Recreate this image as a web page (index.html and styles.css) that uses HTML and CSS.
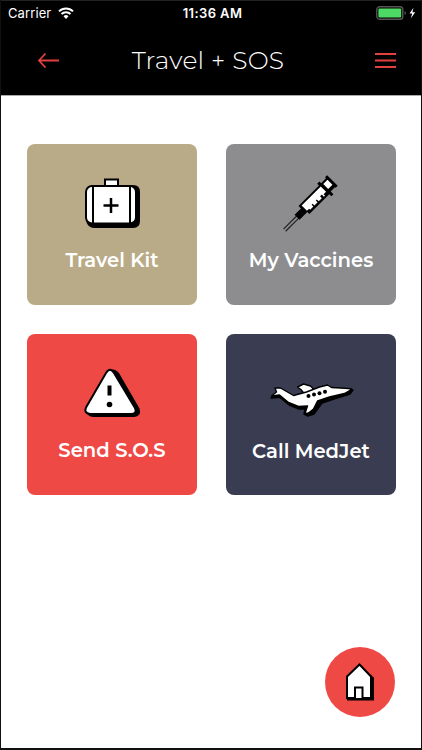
FILE: index.html
```html
<!DOCTYPE html>
<html lang="en">
<head>
  <meta charset="UTF-8" />
  <meta name="viewport" content="width=device-width, initial-scale=1.0"/>
  <title>Travel + SOS</title>
  <link rel="stylesheet" href="styles.css">
</head>
<body>
  <div class="screen">
    <header>
      <div class="status-bar">
        <div class="carrier">
          <span>Carrier</span>
          <svg width="16" height="12" viewBox="0 0 16 12" fill="none" stroke="#fff" stroke-width="2">
            <path d="M1 4.4a10 10 0 0 1 14 0M3.5 7a6.4 6.4 0 0 1 9 0"/>
            <path d="M8 12L5.5 9.3a3.6 3.6 0 0 1 5 0z" fill="#fff" stroke="none"/>
          </svg>
        </div>
        <span class="time">11:36 AM</span>
        <svg class="battery" width="41" height="14" viewBox="0 0 41 14">
          <rect x=".8" y=".8" width="26" height="12.4" rx="2.8" fill="#000" stroke="#555" stroke-width="1.4"/>
          <rect x="2.4" y="2.4" width="22.8" height="9.2" rx="1" fill="#4cd964"/>
          <path d="M28.6 5v4q1.4-.6 1.4-2t-1.4-2z" fill="#555"/>
          <path d="M37.5 1.8L33.5 7.5h2.7l-1.3 4.7 4.3-6h-2.8z" fill="#fff"/>
        </svg>
      </div>
      <nav class="nav-bar">
        <a href="#" class="back" aria-label="Back">
          <svg width="22" height="16" viewBox="0 0 22 16" fill="none" stroke="#e2403f" stroke-width="1.8">
            <path d="M22 8.500H2.500M8.500 1.500L2 8.500l6.500 7"/>
          </svg>
        </a>
        <h1>Travel + SOS</h1>
        <a href="#" class="menu" aria-label="Menu">
          <svg width="22" height="18" viewBox="0 0 22 18" stroke="#e2403f" stroke-width="2">
            <path d="M0 3h21M0 9.500h21M0 16h21"/>
          </svg>
        </a>
      </nav>
    </header>

    <main class="tiles">
      <a href="#" class="tile kit">
        <svg width="60" height="56" viewBox="0 0 60 56">
          <path d="M10 8h41q7 0 7 7v29q0 7-7 7H12q-6 0-8-7z"/>
          <rect x="23" y="2.500" width="13" height="8" fill="#fff" stroke="#000" stroke-width="2"/>
          <rect x="4" y="9" width="50" height="37.500" rx="6" fill="#fff" stroke="#000" stroke-width="2"/>
          <path d="M11 9v37M48 9v37" stroke="#000" stroke-width="2"/>
          <path d="M29 21v15M21.500 28.500h15" stroke="#000" stroke-width="2.500"/>
        </svg>
        <span>Travel Kit</span>
      </a>
      <a href="#" class="tile vaccines">
        <svg width="60" height="60" viewBox="0 0 60 60">
          <g transform="translate(3.700 56.300) rotate(-45)">
            <path d="M0-1.700h20M0 1.300h20" stroke="#222" stroke-width="1.200"/>
            <path d="M18-4h9v-3.500h29V-10h3v2.500h7V-9h3v15h-3V5h-6v4h-3V6H29V3H18z"/>
            <path d="M29.500-5.500h27V2H53v2h-1.500V1H49v2.500h-4.500V1H43v2.500h-4.500V1H37v2.500h-4.500V2h-3zM60-5.500h6v7h-6z" fill="#fff"/>
          </g>
        </svg>
        <span>My Vaccines</span>
      </a>
      <a href="#" class="tile sos">
        <svg width="60" height="52" viewBox="0 0 60 52">
          <path d="M28 2q5-2 9 3l20.500 35.500q2.500 7.500-5 8.500H11q-7-1-6-7z"/>
          <path d="M24 5q4-6.500 8 0l21 35q2.500 5.500-4 6H8q-6.500-1-4-6.500z" fill="#fff" stroke="#000" stroke-width="2"/>
          <path d="M25.500 17.500h4v10h-4z"/>
          <circle cx="27.500" cy="36.500" r="2.800"/>
        </svg>
        <span>Send S.O.S</span>
      </a>
      <a href="#" class="tile medjet">
        <svg width="92" height="42" viewBox="0 0 92 42" stroke="#000" stroke-width="1.400" stroke-linejoin="round">
          <path d="M6 20l6-3 12 10 10 4h6l-1 5 4 2 6-2 8-11 12-4 16-5 3-4-3-1-40 6z"/>
          <path d="M32.500 9l6-3 7 2 5 5-9 2q-4 0-5-3z" fill="#fff"/>
          <path d="M10 10h5.500l13 7.500 13-3.500 13-5 8-2 4 2.500 14 .8q8 0 5 1.700l-6 3.500-15 3.500-12 4-4 8-5 4q-3 1.500-3-1l2-6-9 .5-10-4-9-7.500-8 1 5-4z" fill="#fff"/>
          <g fill="#000" stroke="none">
            <circle cx="43.500" cy="18" r="2"/>
            <circle cx="49" cy="16.500" r="2"/>
            <circle cx="54.500" cy="15.200" r="2"/>
            <circle cx="60" cy="13.700" r="2"/>
          </g>
        </svg>
        <span>Call MedJet</span>
      </a>
    </main>

    <a href="#" class="home" aria-label="Home">
      <svg width="32" height="40" viewBox="0 0 32 40">
        <path d="M26 12.500l4 3v23H3V34z"/>
        <path d="M3 14.500L15.500 2.500 27 14.500V36H3z" fill="#fff" stroke="#000" stroke-width="2"/>
        <path d="M11 36V25.500h7.500V36" fill="#fff" stroke="#000" stroke-width="2"/>
      </svg>
    </a>
  </div>
</body>
</html>
```
FILE: styles.css
```css
* {
  box-sizing: border-box;
}
body {
  margin: 0;
  font-family: Montserrat, Inter, sans-serif;
  background: #fff;
}
a {
  color: inherit;
  text-decoration: none;
}
svg {
  display: block;
}
.screen {
  position: relative;
  height: 750px;
  border: 1px solid #111;
  border-top: none;
  border-bottom-width: 2px;
}
header {
  height: 96px;
  background: #000;
  color: #fff;
  border-top: 1px solid #222;
  border-bottom: 1px solid #aaa;
}
.status-bar {
  display: grid;
  grid-template-columns: 1fr auto 1fr;
  align-items: center;
  height: 24px;
  padding: 0 4px 0 7px;
  font-family: Inter, sans-serif;
  font-size: 13px;
}
.carrier {
  display: flex;
  align-items: center;
  gap: 7px;
  letter-spacing: 0.1px;
}
.time {
  font-weight: 600;
  letter-spacing: 0.4px;
}
.battery {
  justify-self: end;
}
.nav-bar {
  display: grid;
  grid-template-columns: 50px 1fr 50px;
  align-items: center;
  height: 70px;
  padding: 0 24px 0 36px;
}
.menu {
  justify-self: end;
}
h1 {
  margin: 0 18px 0 0;
  font-size: 25px;
  font-weight: 300;
  letter-spacing: 0.25px;
  text-align: center;
  white-space: nowrap;
}
.tiles {
  display: grid;
  grid-template-columns: 170px 170px;
  grid-auto-rows: 161px;
  gap: 29px;
  padding: 48px 26px 0;
}
.tile {
  display: flex;
  flex-direction: column;
  align-items: center;
  border-radius: 8px;
  color: #fff;
  font-size: 19.6px;
  font-weight: 600;
}
.tile span {
  margin-top: auto;
  margin-bottom: 33px;
  line-height: 24px;
}
.kit {
  background: #b9ab87;
  padding-top: 33px;
}
.vaccines {
  background: #8d8d8f;
  padding-top: 30px;
}
.sos {
  background: #ef4946;
  padding-top: 34px;
}
.medjet {
  background: #3a3d52;
  padding-top: 44px;
}
.medjet span {
  margin-bottom: 32px;
}
.home {
  position: absolute;
  right: 26px;
  bottom: 31px;
  display: flex;
  align-items: center;
  justify-content: center;
  width: 70px;
  height: 70px;
  border-radius: 50%;
  background: #ef4946;
}
```
